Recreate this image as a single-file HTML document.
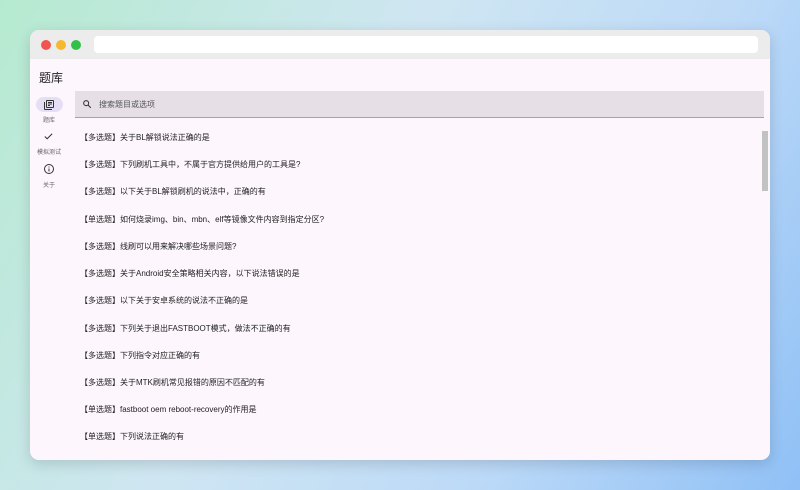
<!DOCTYPE html>
<html><head><meta charset="utf-8"><style>
*{margin:0;padding:0;box-sizing:border-box}
body{width:800px;height:490px;overflow:hidden;background:linear-gradient(120deg,#b6ead0 0%,#cfe6f2 40%,#bcd9f7 70%,#8fc0f6 100%);font-family:"Liberation Sans","Noto Sans CJK SC",sans-serif;position:relative}
.win{position:absolute;left:30px;top:30px;width:740px;height:430px;border-radius:9px;background:#fdf7fd;overflow:hidden;box-shadow:0 4px 14px rgba(0,0,0,.15)}
.bar{height:29px;background:#ececec;position:relative}
.dot{position:absolute;top:10px;width:10px;height:10px;border-radius:50%}
.url{position:absolute;left:64px;top:6px;width:664px;height:17px;background:#fff;border-radius:4px}
.title{position:absolute;left:9px;top:39px;font-size:12px;color:#222}
.pill{position:absolute;left:6px;top:67px;width:27px;height:15px;border-radius:8px;background:#e6def5}
.nl{position:absolute;font-size:6px;color:#666;text-align:center;width:40px}
.search{position:absolute;left:45px;top:61px;width:689px;height:27px;background:#e6e0e6;border-bottom:1px solid #a9a0ab}
.search span{position:absolute;left:24px;top:8px;font-size:8px;color:#555}
.item{position:absolute;left:50px;font-size:8px;color:#222}
.sb{position:absolute;left:732px;top:101px;width:6px;height:60px;background:#c2c2c2}
</style></head><body>
<div class="win">
<div class="bar"><div class="dot" style="left:11px;background:#f0564f"></div><div class="dot" style="left:26px;background:#f5b930"></div><div class="dot" style="left:41px;background:#31c148"></div><div class="url"></div></div>
<div class="title">题库</div>
<div class="pill"></div>
<svg style="position:absolute;left:13px;top:69px" width="12" height="12" viewBox="0 0 24 24"><path fill="#333" d="M4 6H2v14c0 1.1.9 2 2 2h14v-2H4V6zm16-4H8c-1.1 0-2 .9-2 2v12c0 1.1.9 2 2 2h12c1.1 0 2-.9 2-2V4c0-1.1-.9-2-2-2zm0 14H8V4h12v12zM10 9h8v2h-8zm0 3h4v2h-4zm0-6h8v2h-8z"/></svg>
<div class="nl" style="left:-1px;top:85px">题库</div>
<svg style="position:absolute;left:13px;top:101px" width="11" height="11" viewBox="0 0 24 24"><path fill="none" stroke="#333" stroke-width="2.2" d="M4 12l5 5L20 6"/></svg>
<div class="nl" style="left:-1px;top:117px">模拟测试</div>
<svg style="position:absolute;left:13px;top:133px" width="12" height="12" viewBox="0 0 24 24"><circle cx="12" cy="12" r="9" fill="none" stroke="#333" stroke-width="2"/><path d="M12 11v6M12 7v2" stroke="#333" stroke-width="2"/></svg>
<div class="nl" style="left:-1px;top:150px">关于</div>
<div class="search"><svg style="position:absolute;left:7px;top:8px" width="10" height="10" viewBox="0 0 24 24"><circle cx="10" cy="10" r="6" fill="none" stroke="#333" stroke-width="2.5"/><path d="M14.5 14.5L21 21" stroke="#333" stroke-width="2.5"/></svg><span>搜索题目或选项</span></div>
<div class="item" style="top:102px">【多选题】关于BL解锁说法正确的是</div>
<div class="item" style="top:129px">【多选题】下列刷机工具中，不属于官方提供给用户的工具是?</div>
<div class="item" style="top:156px">【多选题】以下关于BL解锁刷机的说法中，正确的有</div>
<div class="item" style="top:184px">【单选题】如何烧录img、bin、mbn、elf等镜像文件内容到指定分区?</div>
<div class="item" style="top:211px">【多选题】线刷可以用来解决哪些场景问题?</div>
<div class="item" style="top:238px">【多选题】关于Android安全策略相关内容，以下说法错误的是</div>
<div class="item" style="top:265px">【多选题】以下关于安卓系统的说法不正确的是</div>
<div class="item" style="top:293px">【多选题】下列关于退出FASTBOOT模式，做法不正确的有</div>
<div class="item" style="top:320px">【多选题】下列指令对应正确的有</div>
<div class="item" style="top:347px">【多选题】关于MTK刷机常见报错的原因不匹配的有</div>
<div class="item" style="top:374px">【单选题】fastboot oem reboot-recovery的作用是</div>
<div class="item" style="top:401px">【单选题】下列说法正确的有</div>
<div class="sb"></div>
</div>
</body></html>
